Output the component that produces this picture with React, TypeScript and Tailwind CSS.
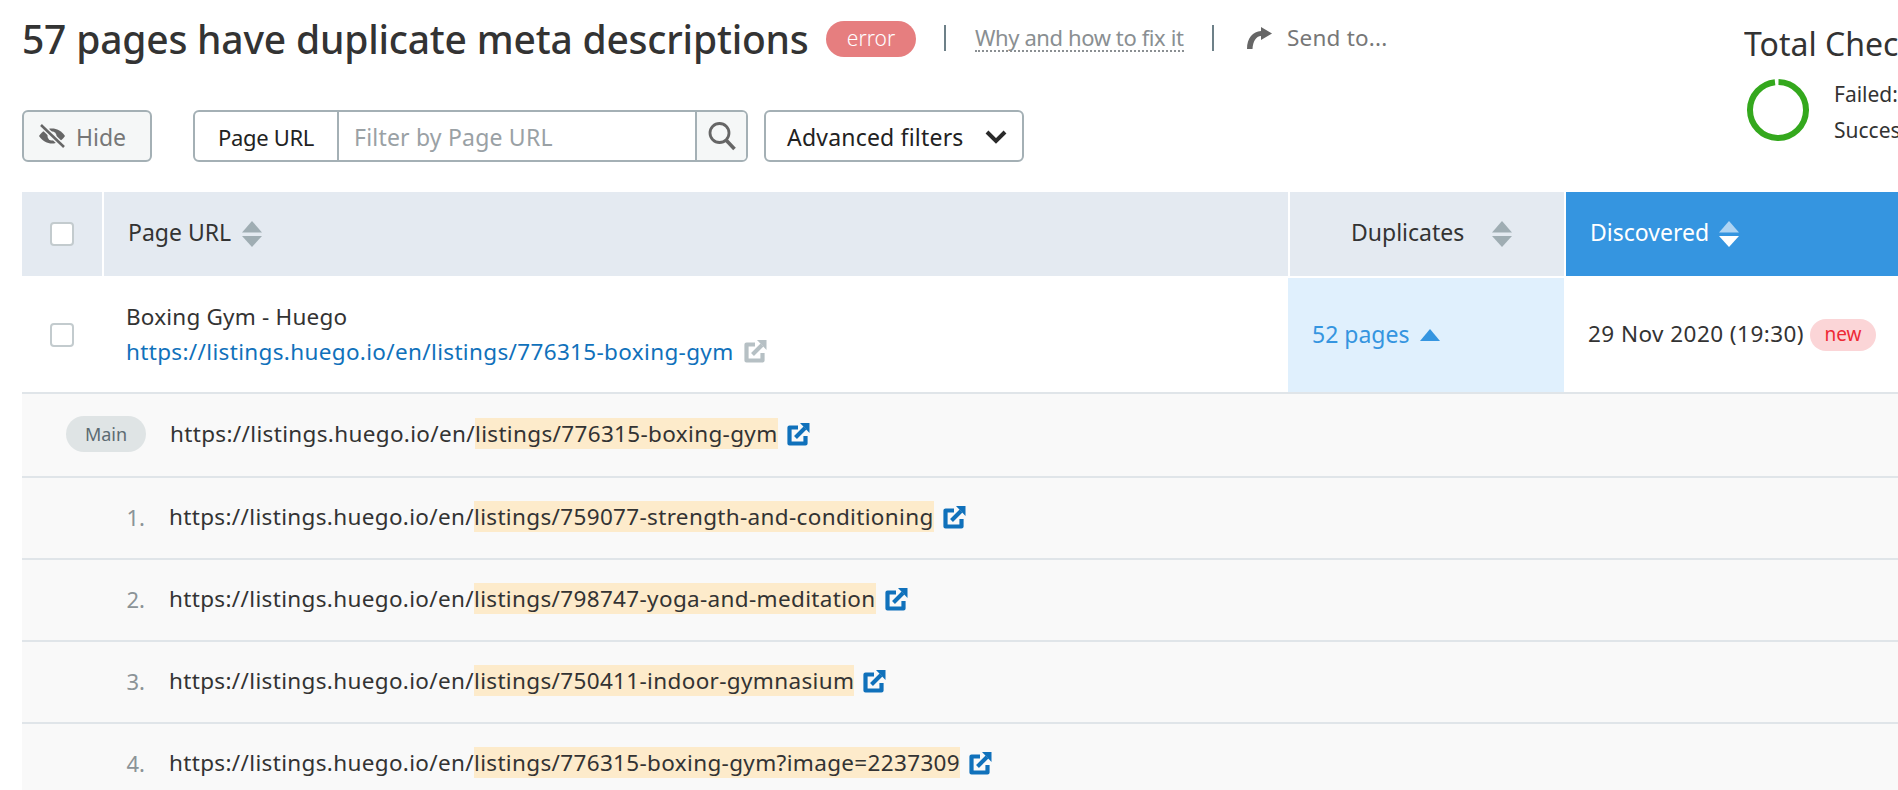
import React from "react";

const font = { fontFamily: '"Noto Sans", sans-serif' };

function Sort({ top = "#9fadb3", bottom = "#9fadb3" }: { top?: string; bottom?: string }) {
  return (
    <svg width="20" height="26" viewBox="0 0 20 26" className="shrink-0">
      <path d="M10 0 L20 11.5 H0 Z" fill={top} />
      <path d="M10 26 L20 15 H0 Z" fill={bottom} />
    </svg>
  );
}

function Ext({ color }: { color: string }) {
  return (
    <svg width="23" height="24" viewBox="0 0 23 24" className="shrink-0">
      <path d="M11 5.5H2.5V21.5H18.5V14" fill="none" stroke={color} strokeWidth="4.2" strokeLinejoin="round" />
      <path d="M13 1H22.5V11Z" fill={color} />
      <path d="M18 6L8.5 15.5" fill="none" stroke={color} strokeWidth="4" />
    </svg>
  );
}

function Check() {
  return <div className="w-6 h-6 rounded-[4px] border-2 border-[#c3cbce] bg-white" />;
}

function Row({ label, pre, hl, pill, tall }: { label: string; pre: string; hl: string; pill?: boolean; tall?: boolean }) {
  return (
    <div className={`${tall ? "h-[84px]" : "h-[82px]"} shrink-0 flex items-center pb-[2px] bg-[#f9f9f9] border-b-2 border-[#e0e5e9]`}>
      <div className={`w-[148px] shrink-0 flex justify-end ${pill ? "pr-[24px]" : "pr-[25px]"}`}>
        {pill ? (
          <span className="w-[80px] h-[36px] rounded-full bg-[#dfe4e5] text-[#5c6b72] text-[18px] flex items-center justify-center">{label}</span>
        ) : (
          <span className="text-[#8b9397] text-[22px]">{label}</span>
        )}
      </div>
      <div className={`text-[22.5px] text-[#333] leading-[26px] tracking-[0.34px] whitespace-nowrap ${pill ? "" : "-ml-[1px]"}`}>
        {pre}
        <span className="bg-[#fdebcb]">{hl}</span>
      </div>
      <div className="ml-[9px]">
        <Ext color="#1071bb" />
      </div>
    </div>
  );
}

export default function App() {
  return (
    <div className="w-[1898px] h-[790px] overflow-hidden bg-white flex flex-col text-[#333]" style={font}>
      <div className="h-[192px] shrink-0 flex pl-[22px]">
        <div className="flex-1 min-w-0 flex flex-col">
          <div className="h-[76px] flex items-center whitespace-nowrap">
            <h1 className="text-[39px] font-medium leading-none text-[#333] tracking-[-0.2px] w-[804px]">57 pages have duplicate meta descriptions</h1>
            <span className="w-[90px] h-[36px] mt-[2px] rounded-full bg-[#e67e7f] text-white text-[21px] font-light flex items-center justify-center">error</span>
            <div className="w-[2px] h-[26px] bg-[#6d8088] ml-[28px]" />
            <a className="ml-[29px] text-[22px] text-[#8a8f92] leading-[26px] border-b-2 border-dotted border-[#8a8f92] w-[209px] whitespace-nowrap tracking-[-0.4px]">Why and how to fix it</a>
            <div className="w-[2px] h-[26px] bg-[#6d8088] ml-[28px]" />
            <svg width="25" height="22" viewBox="0 0 25 22" className="ml-[33px] shrink-0">
              <path d="M0 22C0 11 6 4.5 14 4V0L25 6.5L14 13V9C9 9.5 6 14 5.5 22Z" fill="#666" />
            </svg>
            <span className="ml-[15px] text-[22.5px] text-[#777] tracking-[0.2px]">Send to...</span>
          </div>
          <div className="mt-[34px] h-[52px] flex items-stretch text-[23px]">
            <button className="w-[130px] rounded-[6px] border-2 border-[#a4b0b5] bg-[#f5f7f7] flex items-center gap-[10px] pl-[14px] pt-[2px] text-[#777]">
              <svg width="28" height="26" viewBox="0 0 28 26" className="-mt-[2px]">
                <path d="M1 13C5 7.5 9 5.5 14 5.5C19 5.5 23 7.5 27 13C23 18.5 19 20.5 14 20.5C9 20.5 5 18.5 1 13Z" fill="#666" />
                <circle cx="14" cy="13" r="4.5" fill="#f5f7f7" />
                <path d="M3 2L26 24" stroke="#f5f7f7" strokeWidth="5.5" />
                <path d="M3 2L26 24" stroke="#666" strokeWidth="2.5" />
              </svg>
              Hide
            </button>
            <div className="ml-[41px] w-[555px] flex rounded-[6px] border-2 border-[#a4b0b5] overflow-hidden">
              <div className="w-[144px] border-r-2 border-[#a4b0b5] flex items-center justify-center pt-[2px] text-[22px] text-[#222] tracking-[-0.3px]">Page URL</div>
              <div className="flex-1 flex items-center pt-[2px] pl-[15px] text-[#9aa1a5] tracking-[0.2px]">Filter by Page URL</div>
              <div className="w-[51px] border-l-2 border-[#a4b0b5] bg-[#f5f7f7] flex items-center justify-center">
                <svg width="30" height="30" viewBox="0 0 30 30">
                  <circle cx="12.5" cy="12" r="9.5" fill="none" stroke="#666" strokeWidth="2.8" />
                  <path d="M19 19L27.5 28" stroke="#666" strokeWidth="3.6" />
                </svg>
              </div>
            </div>
            <button className="ml-[16px] w-[260px] rounded-[6px] border-2 border-[#a4b0b5] flex items-center pl-[21px] pt-[2px] text-[#222] tracking-[0.2px]">
              Advanced filters
              <svg width="22" height="16" viewBox="0 0 22 16" className="ml-[21px]">
                <path d="M2 3L11 12L20 3" fill="none" stroke="#2a2a2a" strokeWidth="4" />
              </svg>
            </button>
          </div>
        </div>
        <div className="w-[154px] shrink-0 pt-[24px] overflow-hidden whitespace-nowrap">
          <div className="text-[32px] leading-[40px] text-[#333]">Total Checks</div>
          <div className="flex mt-[15px] ml-[3px] items-start">
            <svg width="62" height="62" viewBox="0 0 62 62" className="shrink-0">
              <circle cx="31" cy="31" r="28" fill="none" stroke="#34a81d" strokeWidth="6" pathLength="100" strokeDasharray="98 2" transform="rotate(-89 31 31)" />
            </svg>
            <div className="ml-[25px] text-[21px] leading-[36px] -mt-[3px] text-[#333]">
              <div>Failed: 1</div>
              <div>Successful: 57</div>
            </div>
          </div>
        </div>
      </div>

      <div className="flex-1 min-h-0 flex flex-col pl-[22px]">
        <div className="h-[84px] shrink-0 flex gap-[2px] text-[23px]">
          <div className="w-[80px] bg-[#e4eaf1] flex items-center justify-center"><Check /></div>
          <div className="w-[1184px] bg-[#e4eaf1] flex items-center gap-[11px] pb-[4px] pl-[24px]">Page URL<div className="mt-[4px]"><Sort /></div></div>
          <div className="w-[274px] bg-[#e4eaf1] flex items-center pb-[4px] pl-[61px]">Duplicates<div className="ml-[28px] mt-[4px]"><Sort /></div></div>
          <div className="flex-1 bg-[#3595e0] flex items-center gap-[10px] pb-[4px] pl-[24px] text-white">Discovered<div className="mt-[4px]"><Sort top="#aed4f3" bottom="#fff" /></div></div>
        </div>
        <div className="h-[118px] shrink-0 flex pt-[2px] border-b-2 border-[#e0e5e9]">
          <div className="w-[80px] flex items-center justify-center"><Check /></div>
          <div className="w-[1186px] pl-[24px] flex flex-col justify-center pb-[3px] text-[22.5px] leading-[35px] tracking-[0.2px]">
            <div>Boxing Gym - Huego</div>
            <div className="flex items-center gap-[10px]">
              <span className="text-[#1071bb] tracking-[0.34px]">https://listings.huego.io/en/listings/776315-boxing-gym</span>
              <Ext color="#b6c0c4" />
            </div>
          </div>
          <div className="w-[276px] bg-[#e0f0fd] flex items-center pb-[2px] pl-[24px] text-[23px] text-[#3595e0]">
            52 pages
            <svg width="20" height="12" viewBox="0 0 20 12" className="ml-[11px] mt-[2px]"><path d="M10 0L20 12H0Z" fill="#3595e0" /></svg>
          </div>
          <div className="flex-1 flex items-center pb-[2px] pl-[24px] text-[22.5px] tracking-[0.45px] whitespace-nowrap">
            29 Nov 2020 (19:30)
            <span className="ml-[6px] w-[66px] h-[32px] mt-[1px] rounded-full bg-[#fbd5d7] text-[#ee2a35] text-[19px] tracking-normal flex items-center justify-center">new</span>
          </div>
        </div>
        <Row pill tall label="Main" pre="https://listings.huego.io/en/" hl="listings/776315-boxing-gym" />
        <Row label="1." pre="https://listings.huego.io/en/" hl="listings/759077-strength-and-conditioning" />
        <Row label="2." pre="https://listings.huego.io/en/" hl="listings/798747-yoga-and-meditation" />
        <Row label="3." pre="https://listings.huego.io/en/" hl="listings/750411-indoor-gymnasium" />
        <Row label="4." pre="https://listings.huego.io/en/" hl="listings/776315-boxing-gym?image=2237309" />
      </div>
    </div>
  );
}
